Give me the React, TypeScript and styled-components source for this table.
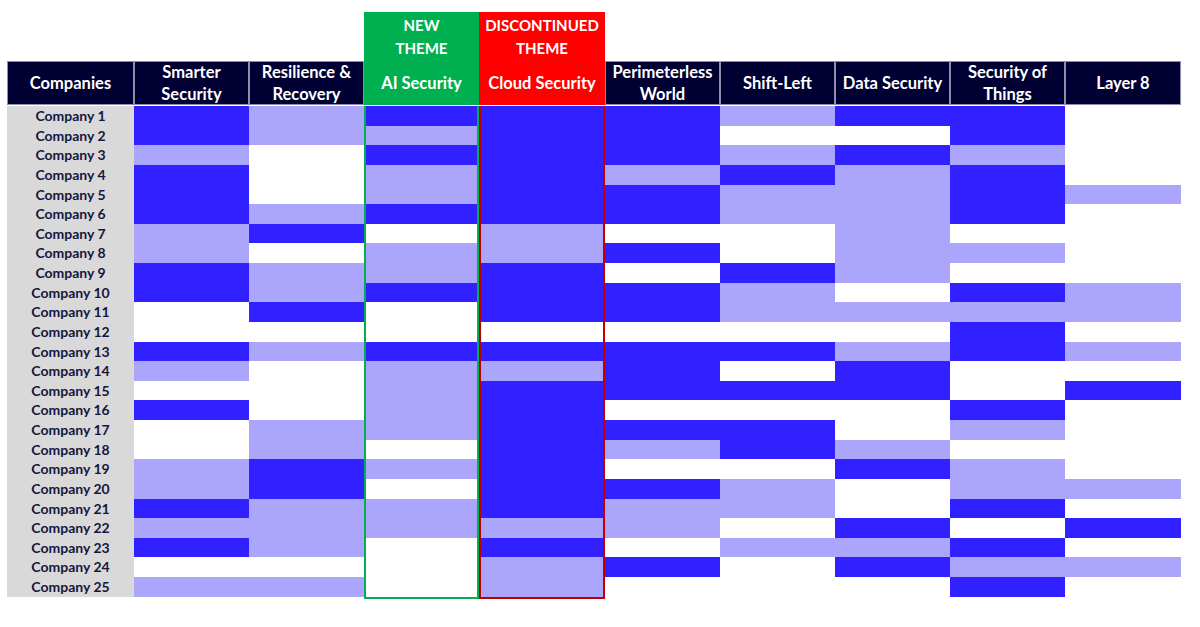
import React from 'react';
import styled, { createGlobalStyle } from 'styled-components';

type Fill = 'D' | 'L' | 'W';
type Theme = 'new' | 'discontinued' | undefined;

const GlobalStyle = createGlobalStyle`
    html, body {
        margin: 0;
        background: #ffffff;
    }
    body {
        font-family: Lato, "Open Sans", Arial, sans-serif;
    }
`;

const fills: Record<Fill, string> = {
    D: '#3120ff',
    L: '#aba6fb',
    W: '#ffffff',
};

const themeColors = {
    new: { bg: '#00b050', border: '#00b050' },
    discontinued: { bg: '#ff0000', border: '#c00000' },
};

const ROW_H = 19.64;
const THEME_H = 49;

const Page = styled.div`
    padding: 12px 0 0 7px;
`;

const Table = styled.div`
    display: flex;
    align-items: flex-start;
`;

const Column = styled.div<{ $w: number; $themed?: boolean }>`
    display: flex;
    flex-direction: column;
    width: ${(p) => p.$w}px;
    flex: 0 0 auto;
    padding-top: ${(p) => (p.$themed ? 0 : THEME_H)}px;
`;

const ThemeLabel = styled.div<{ $theme: 'new' | 'discontinued' }>`
    height: ${THEME_H}px;
    background: ${(p) => themeColors[p.$theme].bg};
    color: #ffffff;
    font-size: 15px;
    font-weight: 700;
    line-height: 23px;
    text-align: center;
    display: flex;
    flex-direction: column;
    justify-content: center;
`;

const HeaderCell = styled.div<{ $theme?: Theme }>`
    height: 44px;
    margin-bottom: 1px;
    background: ${(p) => (p.$theme ? themeColors[p.$theme].bg : '#000033')};
    box-shadow: ${(p) => (p.$theme ? 'none' : 'inset 0 0 0 1px #8e8eaa')};
    color: #ffffff;
    font-size: 16.5px;
    font-weight: 700;
    line-height: 22.5px;
    text-align: center;
    display: flex;
    flex-direction: column;
    justify-content: center;
    white-space: nowrap;
`;

const Body = styled.div<{ $theme?: Theme }>`
    display: flex;
    flex-direction: column;
    box-sizing: border-box;
    border: ${(p) => (p.$theme ? `2px solid ${themeColors[p.$theme].border}` : 'none')};
    border-top: none;
`;

const Cell = styled.div<{ $fill: Fill }>`
    height: ${ROW_H}px;
    background: ${(p) => fills[p.$fill]};
`;

const CompanyBody = styled.div`
    background: #d9d9d9;
    display: flex;
    flex-direction: column;
`;

const CompanyCell = styled.div`
    height: ${ROW_H}px;
    line-height: ${ROW_H}px;
    text-align: center;
    font-size: 14px;
    font-weight: 700;
    color: #16163c;
`;

interface ColumnData {
    title: string[];
    width: number;
    theme?: 'new' | 'discontinued';
    cells: string;
}

const columns: ColumnData[] = [
    { title: ['Smarter', 'Security'], width: 115, cells: 'DDLDDDLLDDWWDLWDWWLLDLDWL' },
    { title: ['Resilience &', 'Recovery'], width: 115, cells: 'LLWWWLDWLLDWLWWWLLDDLLLWL' },
    { title: ['AI Security'], width: 115, theme: 'new', cells: 'DLDLLDWLLDWWDLLLLWLWLLWWW' },
    { title: ['Cloud Security'], width: 126, theme: 'discontinued', cells: 'DDDDDDLLDDDWDLDDDDDDDLDLL' },
    { title: ['Perimeterless', 'World'], width: 115, cells: 'DDDLDDWDWDDWDDDWDLWDLLWDW' },
    { title: ['Shift-Left'], width: 115, cells: 'LWLDLLWWDLLWDWDWDDWLLWLWW' },
    { title: ['Data Security'], width: 115, cells: 'DWDLLLLLLWLWLDDWWLDWWDLDW' },
    { title: ['Security of', 'Things'], width: 115, cells: 'DDLDDDWLWDLDDWWDLWLLDWDLD' },
    { title: ['Layer 8'], width: 116, cells: 'WWWWLWWWWLLWLWDWWWWLWDWLW' },
];

const companies = Array.from({ length: 25 }, (_, i) => `Company ${i + 1}`);

const themeText = {
    new: ['NEW', 'THEME'],
    discontinued: ['DISCONTINUED', 'THEME'],
};

export default function App() {
    return (
        <Page>
            <GlobalStyle />
            <Table>
                <Column $w={127}>
                    <HeaderCell>Companies</HeaderCell>
                    <CompanyBody>
                        {companies.map((c) => (
                            <CompanyCell key={c}>{c}</CompanyCell>
                        ))}
                    </CompanyBody>
                </Column>
                {columns.map((col) => (
                    <Column key={col.title.join(' ')} $w={col.width} $themed={!!col.theme}>
                        {col.theme && (
                            <ThemeLabel $theme={col.theme}>
                                {themeText[col.theme].map((t) => (
                                    <span key={t}>{t}</span>
                                ))}
                            </ThemeLabel>
                        )}
                        <HeaderCell $theme={col.theme}>
                            {col.title.map((t) => (
                                <span key={t}>{t}</span>
                            ))}
                        </HeaderCell>
                        <Body $theme={col.theme}>
                            {col.cells.split('').map((f, i) => (
                                <Cell key={i} $fill={f as Fill} />
                            ))}
                        </Body>
                    </Column>
                ))}
            </Table>
        </Page>
    );
}
